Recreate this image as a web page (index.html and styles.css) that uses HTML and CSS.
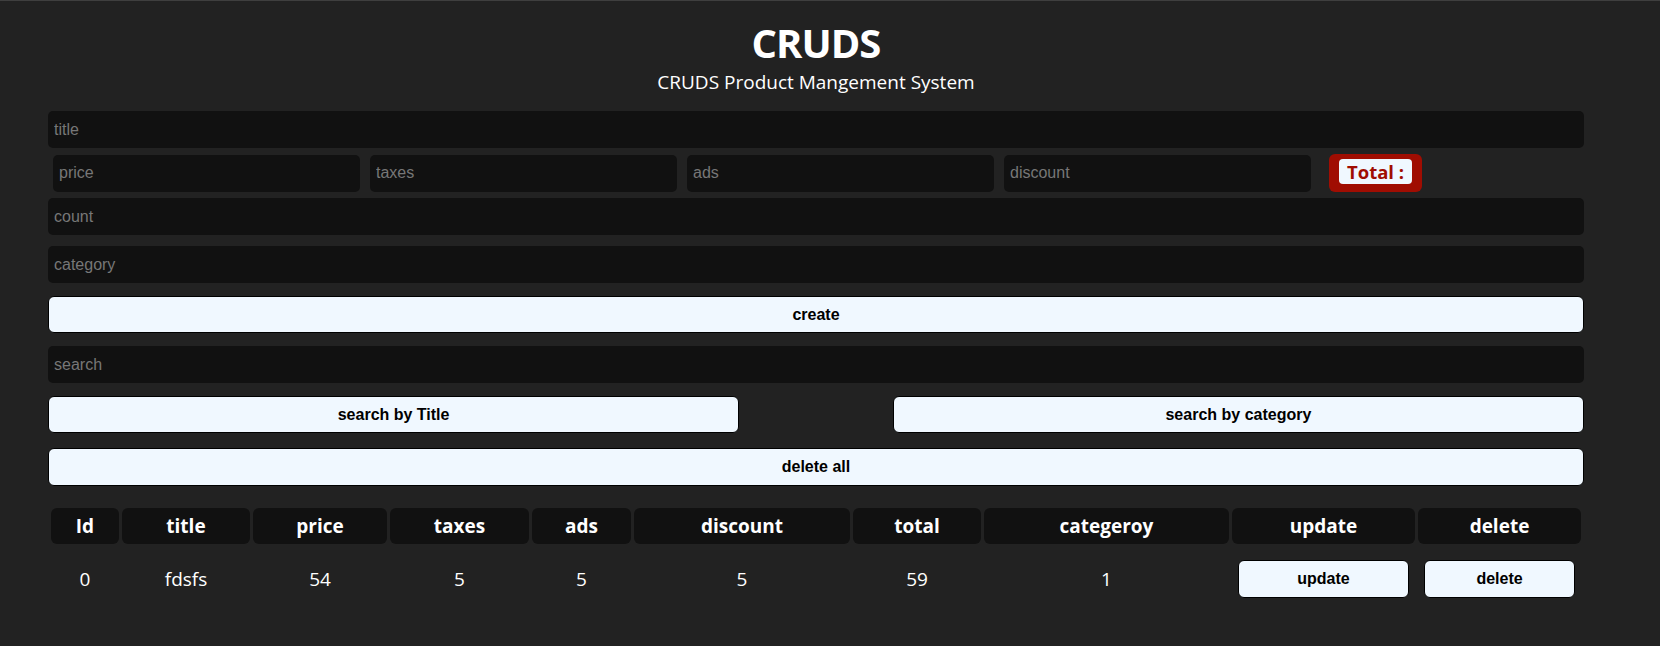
FILE: index.html
```html
<!DOCTYPE html>
<html lang="en">
<head>
<meta charset="UTF-8">
<title>CRUDS</title>
<link rel="stylesheet" href="styles.css">
</head>
<body>
<div class="crud">
  <header class="head">
    <h1 class="logo">CRUDS</h1>
    <p class="sub">CRUDS Product Mangement System</p>
  </header>

  <div class="inputs">
    <input class="field title-field" type="text" placeholder="title">
    <div class="price-row">
      <input class="field small" type="number" placeholder="price">
      <input class="field small" type="number" placeholder="taxes">
      <input class="field small" type="number" placeholder="ads">
      <input class="field small" type="number" placeholder="discount">
      <small class="total"><span class="total-inner">Total :</span></small>
    </div>
    <input class="field count-field" type="number" placeholder="count">
    <input class="field category-field" type="text" placeholder="category">
    <button class="btn create-btn">create</button>
  </div>

  <div class="search-block">
    <input class="field search-field" type="text" placeholder="search">
    <div class="btn-row">
      <button class="btn half">search by Title</button>
      <button class="btn half">search by category</button>
    </div>
  </div>

  <button class="btn delete-all">delete all</button>

  <table class="outputs">
    <thead>
      <tr>
        <th class="c-id">Id</th>
        <th class="c-title">title</th>
        <th class="c-price">price</th>
        <th class="c-taxes">taxes</th>
        <th class="c-ads">ads</th>
        <th class="c-discount">discount</th>
        <th class="c-total">total</th>
        <th class="c-category">categeroy</th>
        <th class="c-update">update</th>
        <th class="c-delete">delete</th>
      </tr>
    </thead>
    <tbody>
      <tr>
        <td>0</td>
        <td>fdsfs</td>
        <td>54</td>
        <td>5</td>
        <td>5</td>
        <td>5</td>
        <td>59</td>
        <td>1</td>
        <td class="act"><button class="btn row-btn">update</button></td>
        <td class="act"><button class="btn row-btn">delete</button></td>
      </tr>
    </tbody>
  </table>
</div>
</body>
</html>
```

FILE: styles.css
```css
* {
  margin: 0;
  padding: 0;
  box-sizing: border-box;
}

html, body {
  background: #222222;
}

body {
  margin: 0;
  border-top: 1px solid #3f3f3f;
  color: #ffffff;
  font-family: "Open Sans", "Noto Sans", sans-serif;
  min-height: 646px;
}

.crud {
  width: 1536px;
  margin-left: 48px;
}

.head {
  padding-top: 18px;
  text-align: center;
}

.logo {
  font-size: 40px;
  line-height: 48px;
  font-weight: 700;
  letter-spacing: -1px;
}

.sub {
  margin-top: 3px;
  font-size: 19px;
  line-height: 24px;
  font-weight: 400;
}

.field {
  display: block;
  width: 100%;
  height: 37px;
  border: none;
  outline: none;
  background: #111111;
  border-radius: 5px;
  padding: 0 6px;
  color: #ffffff;
  font-family: "Liberation Sans", Arial, sans-serif;
  font-size: 16px;
}

.field::placeholder {
  color: #777777;
}

.field::-webkit-outer-spin-button,
.field::-webkit-inner-spin-button {
  -webkit-appearance: none;
  margin: 0;
}

.title-field {
  margin-top: 17px;
}

.price-row {
  margin-top: 6px;
  height: 38px;
  display: flex;
  align-items: center;
  gap: 10px;
  padding-left: 5px;
}

.field.small {
  width: 307px;
  flex: none;
}

.total {
  margin-left: 8px;
  display: block;
  height: 38px;
  background: #a00d02;
  border-radius: 6px;
  padding: 5px 10px 8px;
}

.total-inner {
  display: block;
  height: 25px;
  line-height: 25px;
  padding: 0 8px;
  background: #f0f8ff;
  border-radius: 4px;
  color: #a00d02;
  font-family: "Open Sans", "Noto Sans", sans-serif;
  font-weight: 700;
  font-size: 18.5px;
}

.count-field {
  margin-top: 6px;
}

.category-field {
  margin-top: 11px;
}

.btn {
  display: block;
  width: 100%;
  height: 37px;
  background: #f0f8ff;
  border: 1px solid #000000;
  border-radius: 6px;
  color: #000000;
  font-family: "Liberation Sans", Arial, sans-serif;
  font-weight: 700;
  font-size: 16px;
  cursor: pointer;
}

.create-btn {
  margin-top: 13px;
}

.search-field {
  margin-top: 13px;
}

.btn-row {
  margin-top: 13px;
  display: flex;
  justify-content: space-between;
}

.btn.half {
  width: 45%;
}

.delete-all {
  margin-top: 15px;
  height: 38px;
}

.outputs {
  margin-top: 22px;
  width: 100%;
  table-layout: fixed;
  border-collapse: separate;
  border-spacing: 3px 0;
  text-align: center;
}

.outputs th {
  height: 36px;
  background: #111111;
  border-radius: 6px;
  font-size: 19px;
  font-weight: 700;
  vertical-align: middle;
}

.outputs td {
  padding-top: 16px;
  font-size: 19px;
  font-weight: 400;
  vertical-align: middle;
}

.outputs td.act {
  padding-left: 6px;
  padding-right: 6px;
}

.btn.row-btn {
  height: 38px;
}

.c-id { width: 68px; }
.c-title { width: 128px; }
.c-price { width: 134px; }
.c-taxes { width: 139px; }
.c-ads { width: 99px; }
.c-discount { width: 216px; }
.c-total { width: 128px; }
.c-category { width: 245px; }
.c-update { width: 183px; }
.c-delete { width: 163px; }
```
